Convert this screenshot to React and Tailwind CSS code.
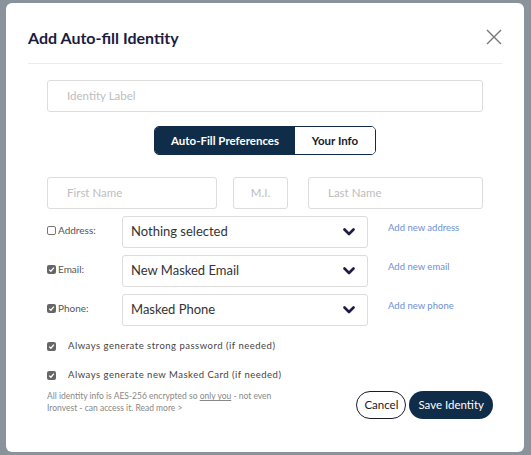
import { useState } from "react";

const font = { fontFamily: 'Lato, "Open Sans", "Liberation Sans", sans-serif' };

function Chevron() {
  return (
    <svg width="12" height="8" viewBox="0 0 12 8" className="text-[#1c1b4a]">
      <path d="M1.5 1.5 L6 6 L10.5 1.5" fill="none" stroke="currentColor" strokeWidth="2.6" strokeLinecap="round" strokeLinejoin="round" />
    </svg>
  );
}

function Check({ checked }) {
  if (!checked) {
    return <span className="inline-block w-[9px] h-[9px] border border-[#777] rounded-[2px] bg-white" />;
  }
  return (
    <span className="inline-flex items-center justify-center w-[9px] h-[9px] rounded-[2px] bg-[#666]">
      <svg width="7" height="7" viewBox="0 0 7 7">
        <path d="M1.2 3.6 L2.9 5.2 L5.9 1.6" fill="none" stroke="white" strokeWidth="1.3" />
      </svg>
    </span>
  );
}

function SelectRow({ checked, label, value, link }) {
  return (
    <div className="flex items-start h-[32px]">
      <div className="w-[75px] flex items-center gap-[2px] pt-[7px] text-[10px] text-[#555]">
        <Check checked={checked} />
        <span>{label}</span>
      </div>
      <div className="w-[246px] h-[32px] border border-[#dcdcdc] rounded-[3px] flex items-center justify-between pl-[8px] pr-[12px] text-[13px] text-[#333]">
        <span>{value}</span>
        <Chevron />
      </div>
      <div className="pl-[20px] pt-[5px] text-[9.5px] text-[#6f8fd2]">{link}</div>
    </div>
  );
}

export default function App() {
  const [tab, setTab] = useState("prefs");
  return (
    <div className="w-[531px] h-[455px] bg-[#8a939b] pt-[3px] pl-[6px] overflow-hidden" style={font}>
      <div className="w-[518px] h-[449px] bg-white rounded-[6px] flex flex-col">
        {/* Header */}
        <div className="flex items-center justify-between pl-[22px] pr-[22px] pt-[23px]">
          <h1 className="text-[16px] font-bold text-[#1b1b3f] leading-[24px]">Add Auto-fill Identity</h1>
          <svg width="16" height="16" viewBox="0 0 16 16" className="mt-[-2px]">
            <path d="M1 1 L15 15 M15 1 L1 15" stroke="#777" strokeWidth="1.4" fill="none" />
          </svg>
        </div>
        <div className="mx-[22px] mt-[13px] border-t border-[#ececec]" />

        {/* Body */}
        <div className="px-[41px] pt-[16px] flex flex-col">
          <div className="h-[32px] border border-[#dcdcdc] rounded-[3px] flex items-center pl-[19px] text-[11.5px] text-[#bdbdbd]">
            Identity Label
          </div>

          <div className="flex justify-center mt-[14px]">
            <div className="flex h-[29px] rounded-[5px] border border-[#0f2c48] overflow-hidden text-[11.5px] font-bold">
              <button
                onClick={() => setTab("prefs")}
                className="w-[140px] bg-[#0f2c48] text-white flex items-center justify-center"
              >
                Auto-Fill Preferences
              </button>
              <button
                onClick={() => setTab("info")}
                className="w-[80px] bg-white text-[#1a1a2e] flex items-center justify-center"
              >
                Your Info
              </button>
            </div>
          </div>

          <div className="flex mt-[22px] h-[32px] text-[11.5px] text-[#bdbdbd]">
            <div className="w-[170px] border border-[#dcdcdc] rounded-[3px] flex items-center pl-[19px]">First Name</div>
            <div className="w-[55px] ml-[16px] border border-[#dcdcdc] rounded-[3px] flex items-center justify-center">M.I.</div>
            <div className="flex-1 ml-[20px] border border-[#dcdcdc] rounded-[3px] flex items-center pl-[19px]">Last Name</div>
          </div>

          <div className="flex flex-col gap-[7px] mt-[7px]">
            <SelectRow checked={false} label="Address:" value="Nothing selected" link="Add new address" />
            <SelectRow checked label="Email:" value="New Masked Email" link="Add new email" />
            <SelectRow checked label="Phone:" value="Masked Phone" link="Add new phone" />
          </div>

          <div className="flex flex-col mt-[15px] gap-[19px] text-[9.5px] tracking-[0.5px] text-[#444]">
            <div className="flex items-center h-[10px]">
              <Check checked />
              <span className="ml-[12px]">Always generate strong password (if needed)</span>
            </div>
            <div className="flex items-center h-[10px]">
              <Check checked />
              <span className="ml-[12px]">Always generate new Masked Card (if needed)</span>
            </div>
          </div>

          <div className="flex items-start justify-between mt-[10px]">
            <p className="w-[235px] text-[8.5px] leading-[12px] text-[#888]">
              All identity info is AES-256 encrypted so <span className="underline">only you</span> - not even Ironvest - can access it. Read more &gt;
            </p>
            <div className="flex gap-[3px] mr-[-10px] mt-[1px]">
              <button className="h-[28px] px-[7px] rounded-full border-[1.5px] border-[#1a1a2e] text-[11.5px] text-[#222]">Cancel</button>
              <button className="h-[28px] px-[9px] rounded-full bg-[#0f2c48] text-[11.5px] text-white">Save Identity</button>
            </div>
          </div>
        </div>
      </div>
    </div>
  );
}
